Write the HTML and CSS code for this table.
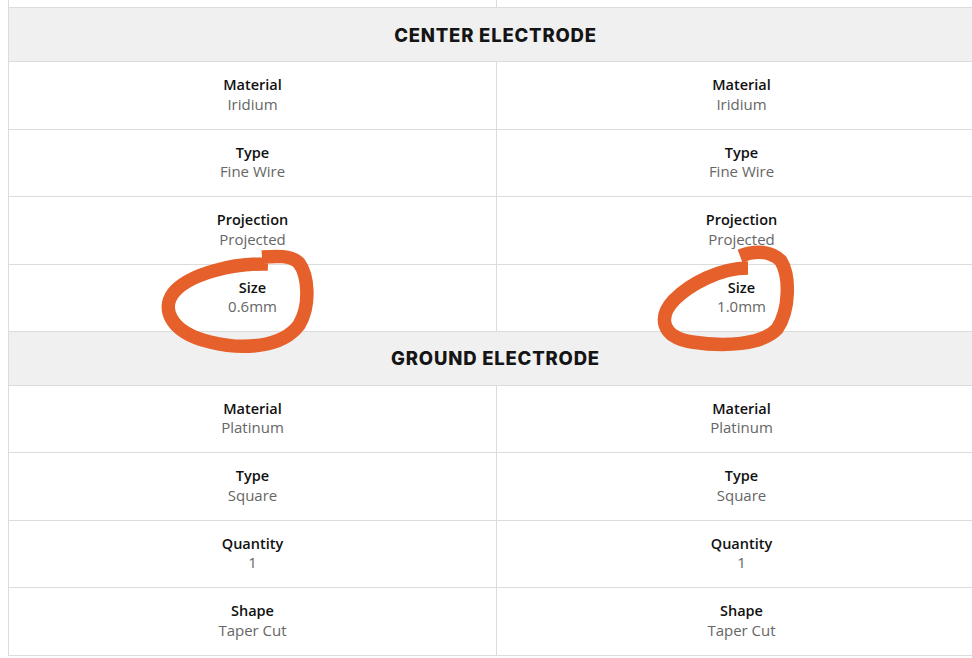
FILE: index.html
```html
<!DOCTYPE html>
<html lang="en">
<head>
<meta charset="utf-8">
<title>Spark plug electrode comparison</title>
<link rel="stylesheet" href="styles.css">
</head>
<body>
<div class="page">
  <div class="specs">
    <div class="row stub"><div class="cell"></div><div class="cell"></div></div>

    <div class="section">CENTER ELECTRODE</div>
    <div class="row"><div class="cell"><div class="label">Material</div><div class="value">Iridium</div></div><div class="cell"><div class="label">Material</div><div class="value">Iridium</div></div></div>
    <div class="row"><div class="cell"><div class="label">Type</div><div class="value">Fine Wire</div></div><div class="cell"><div class="label">Type</div><div class="value">Fine Wire</div></div></div>
    <div class="row"><div class="cell"><div class="label">Projection</div><div class="value">Projected</div></div><div class="cell"><div class="label">Projection</div><div class="value">Projected</div></div></div>
    <div class="row"><div class="cell"><div class="label">Size</div><div class="value">0.6mm</div></div><div class="cell"><div class="label">Size</div><div class="value">1.0mm</div></div></div>

    <div class="section section-short">GROUND ELECTRODE</div>
    <div class="row"><div class="cell"><div class="label">Material</div><div class="value">Platinum</div></div><div class="cell"><div class="label">Material</div><div class="value">Platinum</div></div></div>
    <div class="row"><div class="cell"><div class="label">Type</div><div class="value">Square</div></div><div class="cell"><div class="label">Type</div><div class="value">Square</div></div></div>
    <div class="row"><div class="cell"><div class="label">Quantity</div><div class="value">1</div></div><div class="cell"><div class="label">Quantity</div><div class="value">1</div></div></div>
    <div class="row"><div class="cell"><div class="label">Shape</div><div class="value">Taper Cut</div></div><div class="cell"><div class="label">Shape</div><div class="value">Taper Cut</div></div></div>
  </div>

  <svg class="marks" width="972" height="658" viewBox="0 0 972 658" aria-hidden="true">
    <path d="M 268 264 C 232 263 192 274 176 290 C 160 306 168 332 210 342 C 242 350 282 348 299 325 C 311 305 308 275 299 263 C 291 255 276 256 262 257" />
    <path d="M 748 268 C 720 268 690 284 674 300 C 658 317 661 337 692 342 C 724 347 762 345 777 329 C 790 310 790 276 781 261 C 771 251 756 250 740 256" />
  </svg>
</div>
</body>
</html>
```
FILE: styles.css
```css
html, body {
  margin: 0;
  padding: 0;
  background: #ffffff;
}

body {
  overflow: hidden;
  width: 972px;
  height: 658px;
}

.page {
  position: relative;
  width: 972px;
  height: 658px;
  overflow: hidden;
}

.specs {
  margin-left: 8px;
  width: 978px;
  border-left: 1px solid #dcdcdc;
  box-sizing: border-box;
  font-family: "Open Sans", "Noto Sans", sans-serif;
}

.row {
  display: grid;
  grid-template-columns: 488px 490px;
  height: 67.5px;
  box-sizing: border-box;
  border-bottom: 1px solid #dcdcdc;
}

.row.stub {
  height: 8px;
}

.cell {
  display: flex;
  flex-direction: column;
  align-items: center;
  justify-content: center;
  border-right: 1px solid #dcdcdc;
  text-align: center;
  padding-bottom: 1px;
}

.label {
  font-size: 14.5px;
  font-weight: 600;
  color: #111111;
  line-height: 19.5px;
}

.value {
  font-size: 15px;
  font-weight: 400;
  color: #666666;
  line-height: 19.5px;
}

.section {
  height: 54px;
  box-sizing: border-box;
  border-bottom: 1px solid #dcdcdc;
  background: #f0f0f0;
  display: flex;
  align-items: center;
  justify-content: center;
  padding-right: 4px;
  font-family: "Inter", "Noto Sans", sans-serif;
  font-weight: 800;
  font-size: 18.5px;
  letter-spacing: 0.8px;
  color: #151515;
}

.section-short {
  height: 53.5px;
}

.marks {
  position: absolute;
  left: 0;
  top: 0;
  pointer-events: none;
}

.marks path {
  fill: none;
  stroke: #e5602b;
  stroke-width: 13.5;
  stroke-linecap: butt;
  stroke-linejoin: round;
}
```
